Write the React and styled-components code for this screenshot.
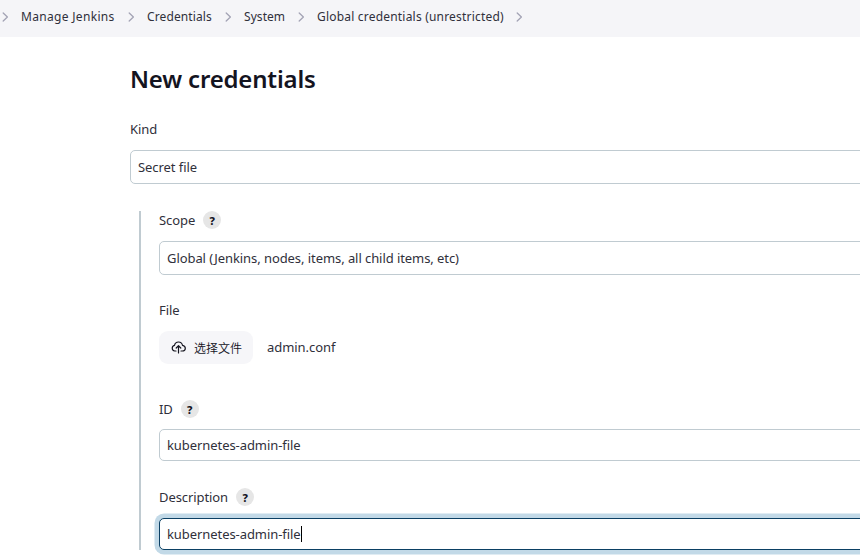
import React from "react";
import styled, { createGlobalStyle } from "styled-components";

const GlobalStyle = createGlobalStyle`
  * { box-sizing: border-box; }
  html, body { margin: 0; background: #fff; overflow: hidden; }
  body {
    font-family: "Noto Sans", "Noto Sans CJK SC", sans-serif;
    font-size: 13px;
    font-weight: 400;
    color: #30303b;
  }
`;

const Page = styled.div`
  height: 560px;
  overflow: hidden;
`;

const Breadcrumbs = styled.nav`
  display: flex;
  align-items: center;
  height: 37px;
  padding: 0 0 3px 2px;
  background: #f5f5f8;
`;

const Crumb = styled.span`
  flex: none;
  width: ${(p) => p.$width}px;
  margin: 0 12px 0 12px;
  font-size: 12px;
  line-height: 20px;
  letter-spacing: ${(p) => p.$tracking || 0}px;
  white-space: nowrap;
`;

const Chevron = styled.svg`
  flex: none;
  display: block;
  width: 7px;
  height: 10px;
`;

const Main = styled.main`
  width: 900px;
  padding: 24px 0 0 130px;
`;

const Title = styled.h1`
  margin: 0 0 23px;
  font-size: 24px;
  font-weight: 600;
  line-height: 36px;
  letter-spacing: -0.18px;
  color: #14141f;
`;

const Label = styled.div`
  display: flex;
  align-items: center;
  height: 18px;
  margin-bottom: ${(p) => p.$gap}px;
  letter-spacing: -0.08px;
`;

const Help = styled.span`
  width: 18px;
  height: 18px;
  margin-left: 8px;
  border-radius: 50%;
  background: #e6e6e6;
  color: #14141f;
  font-size: 11px;
  font-weight: 800;
  line-height: 19px;
  letter-spacing: 0;
  text-align: center;
`;

const Field = styled.div`
  display: flex;
  align-items: center;
  height: ${(p) => p.$height}px;
  padding: 0 7px;
  border: 1px solid ${(p) => (p.$focused ? "#0b4064" : "#c0cbd1")};
  border-radius: 5px;
  background: #fff;
  box-shadow: ${(p) => (p.$focused ? "0 0 0 4.5px #c2d9e7" : "none")};
  letter-spacing: -0.07px;
  white-space: pre;
`;

const Caret = styled.span`
  width: 1px;
  height: 16px;
  background: #000;
`;

const Nested = styled.section`
  height: 339px;
  margin: 27px 0 0 9px;
  padding-left: 18px;
  border-left: 2px solid #c0cbd1;
`;

const Group = styled.div`
  height: ${(p) => p.$height}px;
`;

const FileRow = styled.div`
  display: flex;
  align-items: center;
  gap: 14px;
  letter-spacing: -0.06px;
`;

const FileName = styled.span`
  padding-bottom: 2px;
`;

const UploadButton = styled.button`
  display: flex;
  align-items: center;
  gap: 8px;
  width: 94px;
  height: 33px;
  padding: 0 0 1px 12px;
  border: 0;
  border-radius: 9px;
  background: #f6f6f9;
  color: #14141f;
  font: 350 12px "Noto Sans CJK SC", sans-serif;
  white-space: nowrap;
`;

const UploadIcon = styled.svg`
  flex: none;
  width: 15px;
  height: 13px;
`;

const Separator = () => (
  <Chevron viewBox="0 0 7 10" fill="none" stroke="#a3a3b5" strokeWidth="1.3" strokeLinecap="round" strokeLinejoin="round">
    <path d="M1.2 1 5.4 5 1.2 9" />
  </Chevron>
);

const crumbs = [
  { text: "Manage Jenkins", width: 95, tracking: 0.32 },
  { text: "Credentials", width: 66, tracking: 0.12 },
  { text: "System", width: 42, tracking: 0.06 },
  { text: "Global credentials (unrestricted)", width: 187, tracking: 0.2 },
];

export default function App() {
  return (
    <Page>
      <GlobalStyle />
      <Breadcrumbs>
        <Separator />
        {crumbs.map((c) => (
          <React.Fragment key={c.text}>
            <Crumb $width={c.width} $tracking={c.tracking}>{c.text}</Crumb>
            <Separator />
          </React.Fragment>
        ))}
      </Breadcrumbs>
      <Main>
        <Title>New credentials</Title>
        <Label $gap={12}>Kind</Label>
        <Field $height={34}>Secret file</Field>
        <Nested>
          <Group $height={90}>
            <Label $gap={12}>Scope<Help>?</Help></Label>
            <Field $height={34}>Global (Jenkins, nodes, items, all child items, etc)</Field>
          </Group>
          <Group $height={99}>
            <Label $gap={12}>File</Label>
            <FileRow>
              <UploadButton type="button">
                <UploadIcon viewBox="0 0 15 13" fill="none" stroke="currentColor" strokeWidth="1.2" strokeLinecap="round" strokeLinejoin="round">
                  <path d="M5 10H3.7a2.9 2.9 0 0 1-.2-5.7C4 2.2 5.5 1 7.5 1c2.1 0 3.6 1.3 4 3.3 1.7.3 2.8 1.4 2.8 2.9 0 1.7-1.2 2.8-3 2.8H10" />
                  <path d="M7.5 12V4.8M5.2 7l2.3-2.3L9.8 7" />
                </UploadIcon>
                选择文件
              </UploadButton>
              <FileName>admin.conf</FileName>
            </FileRow>
          </Group>
          <Group $height={88}>
            <Label $gap={11}>ID<Help>?</Help></Label>
            <Field $height={32}>kubernetes-admin-file</Field>
          </Group>
          <Group $height={62}>
            <Label $gap={12}>Description<Help>?</Help></Label>
            <Field $height={32} $focused>kubernetes-admin-file<Caret /></Field>
          </Group>
        </Nested>
      </Main>
    </Page>
  );
}
